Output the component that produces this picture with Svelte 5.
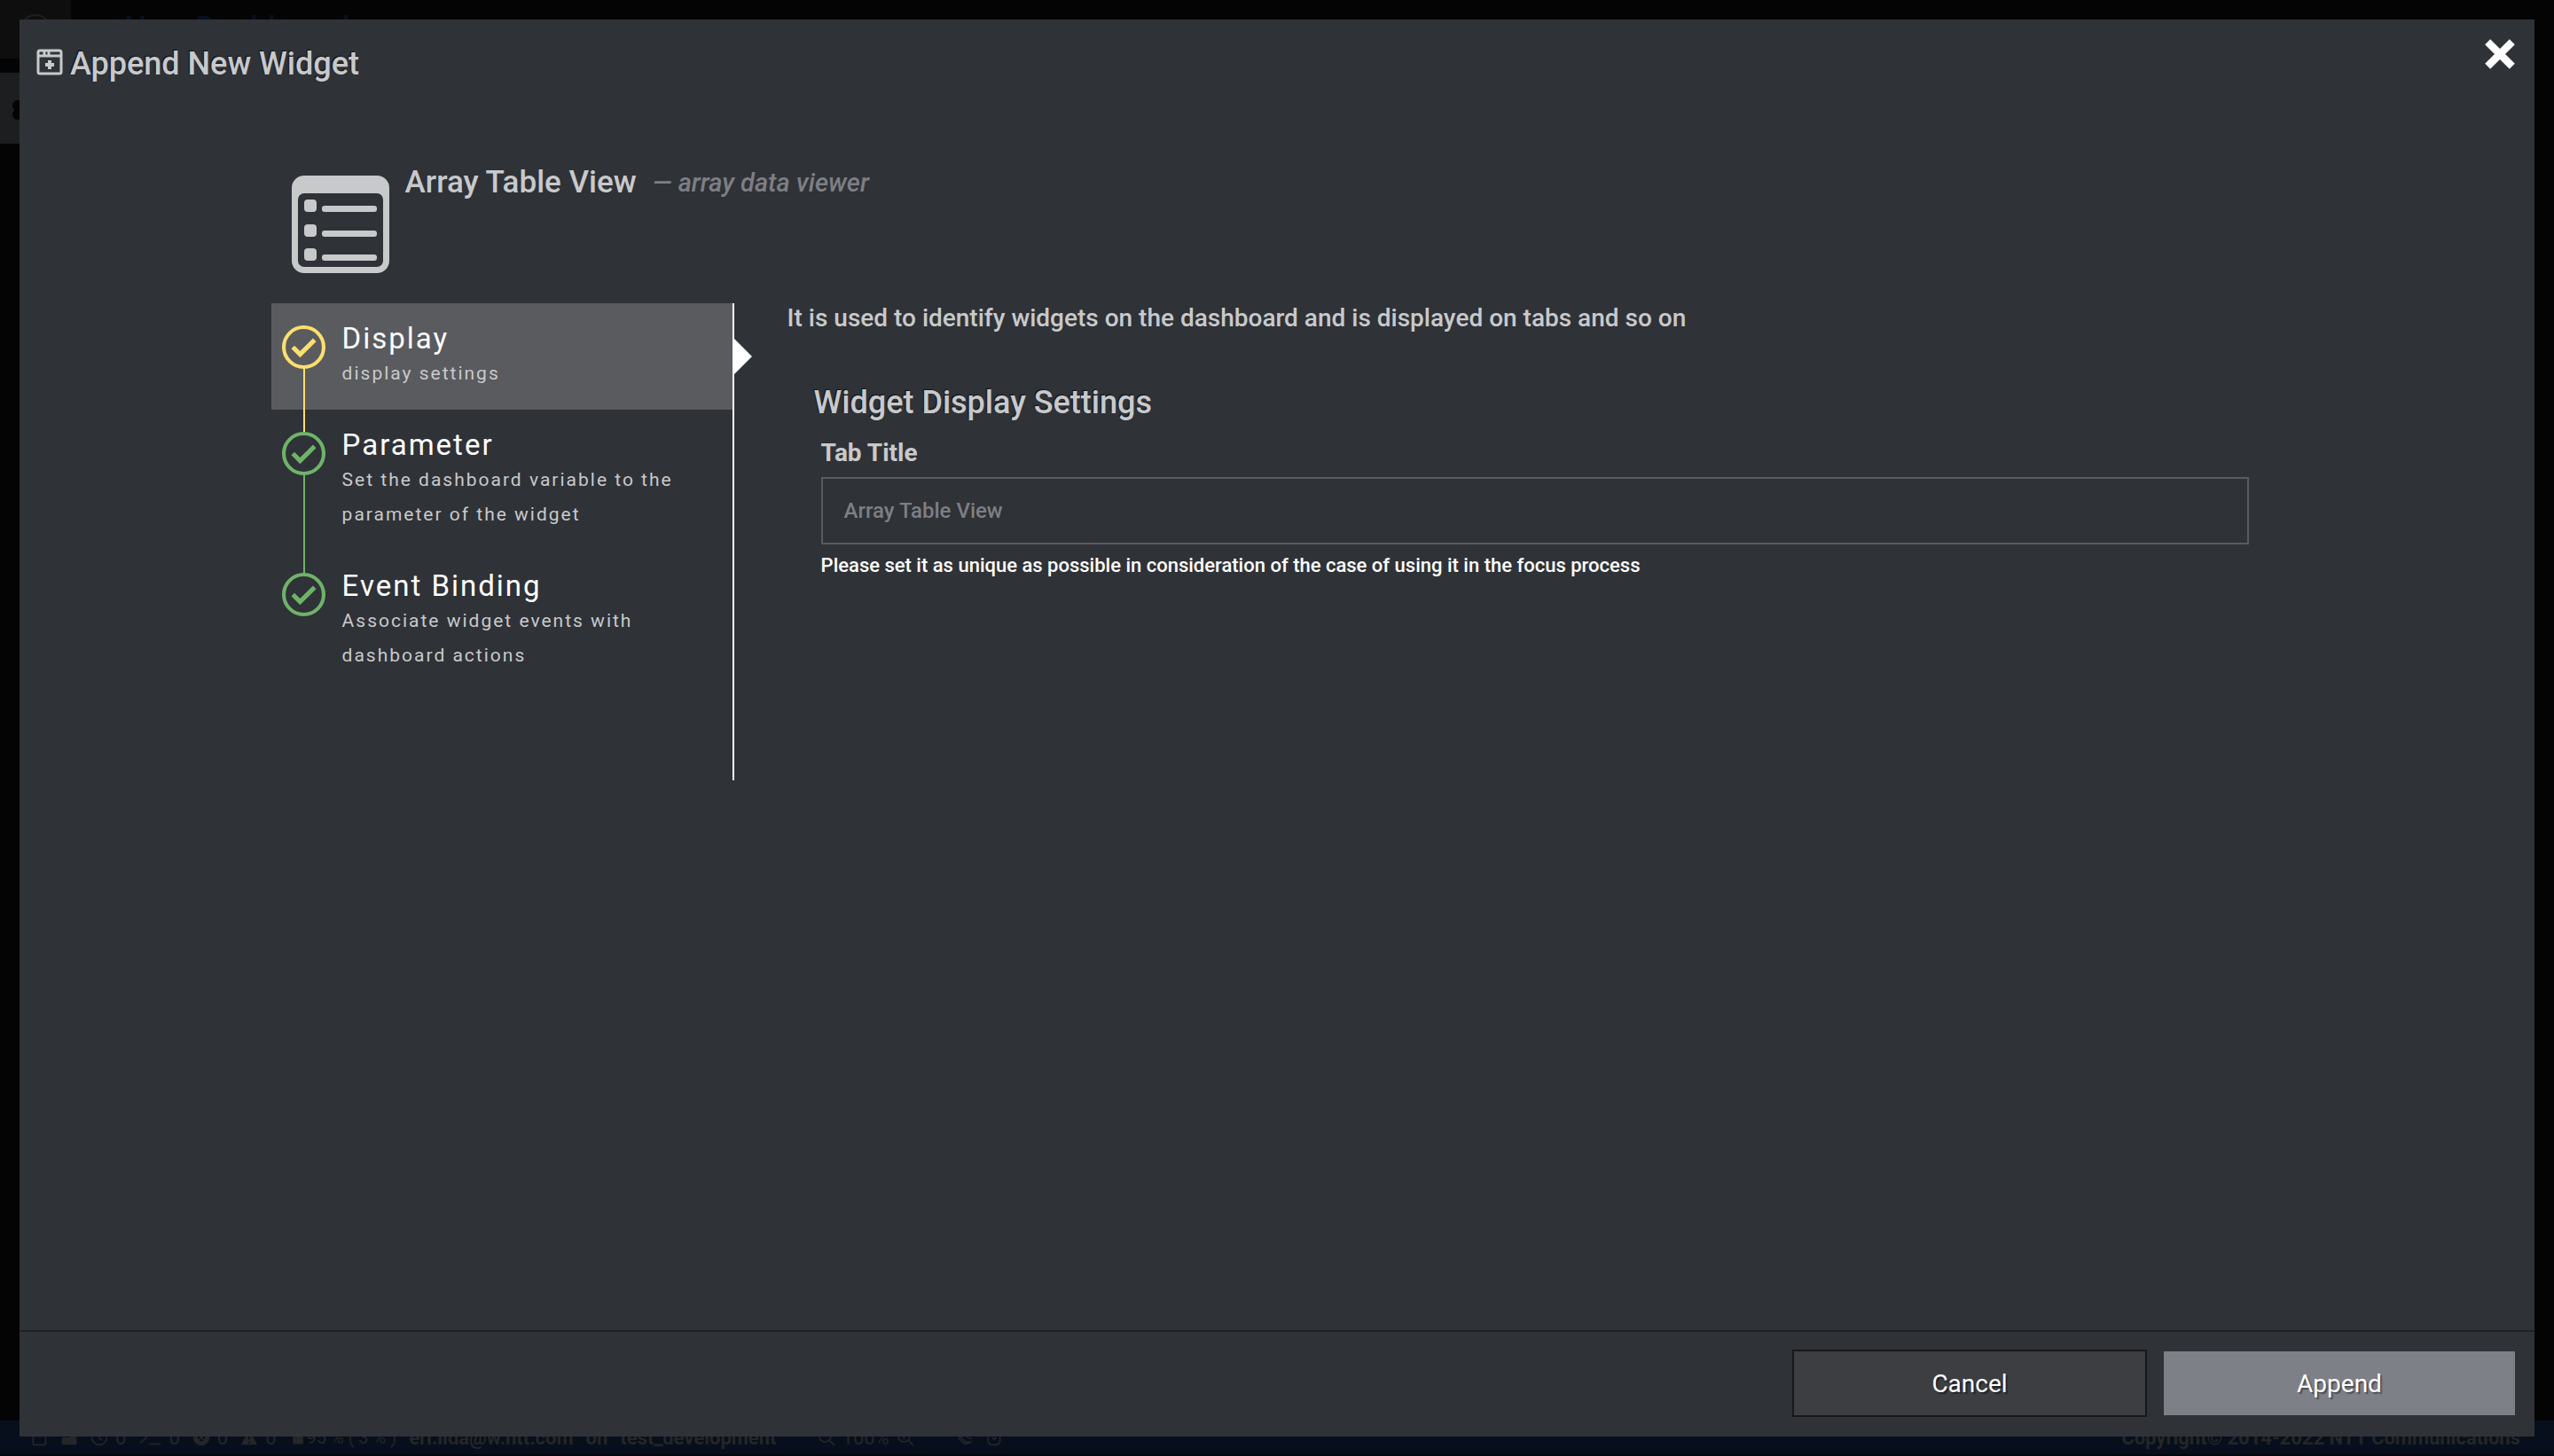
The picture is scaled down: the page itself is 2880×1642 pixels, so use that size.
<script lang="ts">
  type Step = { id: string; title: string; description: string };

  const steps: Step[] = [
    { id: 'display', title: 'Display', description: 'display settings' },
    {
      id: 'parameter',
      title: 'Parameter',
      description: 'Set the dashboard variable to the parameter of the widget',
    },
    {
      id: 'event',
      title: 'Event Binding',
      description: 'Associate widget events with dashboard actions',
    },
  ];

  let current = $state('display');
  let tabTitle = $state('');
</script>

<div class="screen">
  <!-- Dashboard behind the dialog, only its edges are visible -->
  <div class="backdrop" aria-hidden="true">
    <div class="topbar">
      <div class="logo">
        <svg viewBox="0 0 40 40"><circle cx="20" cy="20" r="17" /></svg>
      </div>
      <span class="board-title">New Dashboard</span>
    </div>
    <div class="side-tab">
      <svg viewBox="0 0 24 24"><circle cx="12" cy="7" r="6" /><circle cx="12" cy="17" r="6" /></svg>
    </div>
    <div class="statusbar">
      <svg class="s-icon" viewBox="0 0 24 24">
        <rect x="4" y="10" width="17" height="12" rx="2" /><path d="M8 10V6a4 4 0 0 1 9 0v4" />
      </svg>
      <svg class="s-icon solid" viewBox="0 0 24 24"><path d="M2 12h11V2h9v20H2z" /></svg>
      <span class="pair">
        <svg class="s-icon" viewBox="0 0 24 24"><circle cx="12" cy="12" r="10" /><path d="M12 6v7l4 3" /></svg>0
      </span>
      <span class="pair">
        <svg class="s-icon wide" viewBox="0 0 31 24"><path d="M2 4l9 8-9 8M14 21h16" /></svg>0
      </span>
      <span class="pair">
        <svg class="s-icon" viewBox="0 0 24 24">
          <circle cx="12" cy="12" r="8" stroke-width="6" /><path d="M8 8l8 8M16 8l-8 8" />
        </svg>0
      </span>
      <span class="pair">
        <svg class="s-icon solid" viewBox="0 0 24 24">
          <path fill-rule="evenodd" d="M12 2l11 20H1zM11 9v6h2V9zM11 18v2h2v-2z" />
        </svg>0
      </span>
      <span class="pair battery">
        <svg class="s-icon solid" viewBox="0 0 24 24"><rect x="5" y="3" width="14" height="18" /></svg>95 % ( 3 % )
      </span>
      <b>eri.iida@w.ntt.com</b>
      <b>on</b>
      <b>test_development</b>
      <span class="zoom">
        <svg class="s-icon" viewBox="0 0 24 24"><circle cx="10" cy="10" r="8" /><path d="M16 16l7 7M6 10h8" /></svg>
        100%
        <svg class="s-icon" viewBox="0 0 24 24"><circle cx="10" cy="10" r="8" /><path d="M16 16l7 7M6 10h8M10 6v8" /></svg>
      </span>
      <svg class="s-icon" viewBox="0 0 24 24"><path d="M9 2a10 10 0 1 0 13 16A11 11 0 0 1 9 2zM14 2a8 8 0 0 0 9 11" /></svg>
      <svg class="s-icon" viewBox="0 0 24 24"><path d="M4 4h16v14l-3 4H7l-3-4zM9 12l3 3 3-3" /></svg>
      <b class="copyright">Copyright© 2014-2022 NTT Communications</b>
    </div>
  </div>

  <div class="dialog" role="dialog" aria-modal="true" aria-labelledby="dialog-title">
    <header class="dialog-header">
      <svg class="header-icon" viewBox="0 0 30 30" aria-hidden="true">
        <rect x="2" y="2" width="26" height="26" rx="2" />
        <path d="M2 8h26M9 3v5M14 3v5" />
        <path class="plus" d="M15 13v10M10 18h10" />
      </svg>
      <h1 id="dialog-title">Append New Widget</h1>
      <button class="close" type="button" aria-label="Close">
        <svg viewBox="0 0 32 32"><path d="M3 3l26 26M29 3L3 29" /></svg>
      </button>
    </header>

    <main class="dialog-body">
      <div class="widget-header">
        <svg class="widget-icon" viewBox="0 0 110 110" aria-hidden="true">
          <path
            fill-rule="evenodd"
            d="M14 0h82a14 14 0 0 1 14 14v82a14 14 0 0 1-14 14H14A14 14 0 0 1 0 96V14A14 14 0 0 1 14 0zM14 20a7 7 0 0 0-7 7v69a7 7 0 0 0 7 7h82a7 7 0 0 0 7-7V27a7 7 0 0 0-7-7z"
          />
          {#each [27, 55, 82] as y (y)}
            <rect x="14" {y} width="14" height="14" rx="4" />
            <rect x="34" y={y + 7} width="62" height="7" rx="3" />
          {/each}
        </svg>
        <h2>Array Table View</h2>
        <em>— array data viewer</em>
      </div>

      <div class="wizard">
        <nav class="steps">
          {#each steps as step (step.id)}
            <button
              type="button"
              class="step"
              class:active={current === step.id}
              aria-current={current === step.id ? 'step' : undefined}
              onclick={() => (current = step.id)}
            >
              <span class="marker">
                <svg viewBox="0 0 48 48" aria-hidden="true">
                  <circle cx="24" cy="24" r="22" />
                  <path d="M12 24l8 8 16-16" />
                </svg>
              </span>
              <span class="step-text">
                <span class="step-title">{step.title}</span>
                <span class="step-description">{step.description}</span>
              </span>
            </button>
          {/each}
        </nav>

        <section class="panel">
          <p class="lead">It is used to identify widgets on the dashboard and is displayed on tabs and so on</p>
          <form class="settings">
            <h3>Widget Display Settings</h3>
            <div class="field">
              <label for="tab-title">Tab Title</label>
              <input id="tab-title" type="text" placeholder="Array Table View" bind:value={tabTitle} />
              <p class="help">
                Please set it as unique as possible in consideration of the case of using it in the focus process
              </p>
            </div>
          </form>
        </section>
      </div>
    </main>

    <footer class="dialog-footer">
      <button class="btn cancel" type="button">Cancel</button>
      <button class="btn append" type="button">Append</button>
    </footer>
  </div>
</div>

<style>
  :global(body) {
    margin: 0;
    background: #040405;
  }

  .screen {
    position: relative;
    box-sizing: border-box;
    display: flex;
    min-height: 100vh;
    padding: 22px;
    overflow: hidden;
    font-family: Roboto, sans-serif;
    color: #c8c9cb;
  }

  h1,
  h2,
  h3,
  p {
    margin: 0;
    font-weight: 500;
  }

  button {
    font-family: inherit;
    color: inherit;
    cursor: pointer;
  }

  /* dimmed dashboard */
  .backdrop {
    position: absolute;
    inset: 0;
    display: flex;
    flex-direction: column;
    color: #252627;
  }

  .topbar {
    display: flex;
    height: 66px;
    margin-bottom: 16px;
  }

  .logo {
    width: 80px;
    background: #0e0e0e;
  }

  .logo svg {
    display: block;
    width: 40px;
    margin: 14px 20px;
    fill: none;
    stroke: #1d1e1f;
    stroke-width: 2;
  }

  .board-title {
    padding: 12px 60px;
    font-size: 36px;
    font-weight: 500;
    line-height: 40px;
    color: #07101f;
  }

  .side-tab {
    width: 80px;
    height: 80px;
    background: #1d1e1f;
  }

  .side-tab svg {
    width: 24px;
    margin: 30px 8px;
    fill: #040405;
  }

  .statusbar {
    display: flex;
    align-items: center;
    gap: 14px;
    box-sizing: border-box;
    height: 40px;
    margin-top: auto;
    padding: 0 38px 0 34px;
    border-bottom: 2px solid #02050a;
    background: #070f1c;
    font-size: 22px;
    white-space: nowrap;
  }

  .pair,
  .zoom {
    display: flex;
    align-items: center;
    gap: 8px;
  }

  .pair.battery {
    gap: 0;
    font-size: 20px;
  }

  .zoom {
    margin: 0 32px;
  }

  .s-icon {
    width: 20px;
    height: 20px;
    fill: none;
    stroke: currentColor;
    stroke-width: 2;
  }

  .s-icon.wide {
    width: 26px;
  }

  .s-icon.solid {
    fill: currentColor;
    stroke: none;
  }

  .copyright {
    margin-left: auto;
  }

  /* dialog */
  .dialog {
    position: relative;
    display: flex;
    flex: 1;
    flex-direction: column;
    background: #2f3237;
  }

  .dialog-header {
    display: flex;
    align-items: center;
    gap: 8px;
    padding: 22px 19px 0;
  }

  .header-icon {
    width: 30px;
    height: 30px;
    margin-bottom: 4px;
    fill: none;
    stroke: #c8c9cb;
    stroke-width: 3;
  }

  .header-icon .plus {
    stroke-width: 4;
  }

  h1 {
    font-size: 36px;
    line-height: 56px;
    text-shadow: -1px -1px 1px #111214;
  }

  .close {
    align-self: flex-start;
    height: 34px;
    margin-left: auto;
    padding: 0 3px;
    border: 0;
    background: none;
  }

  .close svg {
    display: block;
    width: 34px;
    height: 34px;
    stroke: #fff;
    stroke-width: 8;
  }

  .dialog-body {
    flex: 1;
    width: 80%;
    margin: 0 auto;
    padding-top: 78px;
  }

  .widget-header {
    display: flex;
    align-items: flex-start;
    gap: 18px;
    padding: 0 23px;
    line-height: 56px;
  }

  .widget-icon {
    width: 110px;
    height: 110px;
    margin: 20px 0 34px;
    fill: #c8c9cb;
  }

  h2 {
    font-size: 35px;
  }

  em {
    font-size: 29px;
    font-weight: 500;
    color: #7d7f84;
  }

  .wizard {
    display: flex;
  }

  .steps {
    width: 520px;
    min-height: 538px;
    border-right: 2px solid #fff;
  }

  .step {
    position: relative;
    display: flex;
    gap: 19px;
    width: 100%;
    padding: 20px 60px 21px 12px;
    border: 0;
    background: none;
    color: #6fb369;
    text-align: left;
    letter-spacing: 2px;
  }

  .step.active {
    background: #5a5b5f;
    color: #fbdf6f;
  }

  .step.active::after {
    position: absolute;
    top: 40px;
    left: calc(100% + 2px);
    border: 20px solid transparent;
    border-left-color: #fff;
    content: '';
  }

  .marker {
    position: relative;
    padding-top: 5px;
  }

  .marker svg {
    display: block;
    width: 49px;
    height: 49px;
    fill: none;
    stroke: currentColor;
    stroke-width: 4;
  }

  .marker path {
    stroke-width: 5;
  }

  /* connector down to the next marker */
  .step:not(:last-child) .marker::after {
    position: absolute;
    top: 53px;
    bottom: -46px;
    left: 24px;
    width: 2px;
    background: currentColor;
    content: '';
  }

  .step-text {
    display: flex;
    flex-direction: column;
  }

  .step-title {
    font-size: 33px;
    line-height: 40px;
    color: #fff;
  }

  .step-description {
    font-size: 21px;
    line-height: 39px;
    color: #c8c9cb;
  }

  .panel {
    flex: 1;
    padding-left: 60px;
  }

  .lead {
    font-size: 28px;
    line-height: 34px;
  }

  .settings {
    padding: 52px 30px 0;
  }

  h3 {
    font-size: 36px;
    line-height: 52px;
    text-shadow: -1px -1px 1px #111214;
  }

  .field {
    display: flex;
    flex-direction: column;
    padding: 12px 8px 0;
  }

  label {
    font-size: 28px;
    font-weight: 700;
    line-height: 38px;
  }

  input {
    box-sizing: border-box;
    height: 76px;
    margin: 8px 0;
    padding: 0 24px;
    border: 2px solid #5a5b5f;
    background: #2f3237;
    color: #c8c9cb;
    font-family: inherit;
    font-size: 24px;
    font-weight: 500;
  }

  input::placeholder {
    color: #7d7f84;
  }

  .help {
    font-size: 22px;
    line-height: 32px;
    color: #fff;
  }

  .dialog-footer {
    display: flex;
    justify-content: flex-end;
    gap: 17px;
    padding: 20px 20px 22px;
    border-top: 2px solid #1f2123;
  }

  .btn {
    box-sizing: border-box;
    width: 400px;
    height: 76px;
    border: 2px solid #16181b;
    background: #3c3e42;
    color: #fff;
    font-size: 28px;
    text-shadow: 2px 2px 1px #222428;
  }

  .append {
    border-color: transparent;
    background: #7d8087;
    background-clip: padding-box;
    text-shadow: 2px 2px 1px #4d4f54;
  }
</style>
